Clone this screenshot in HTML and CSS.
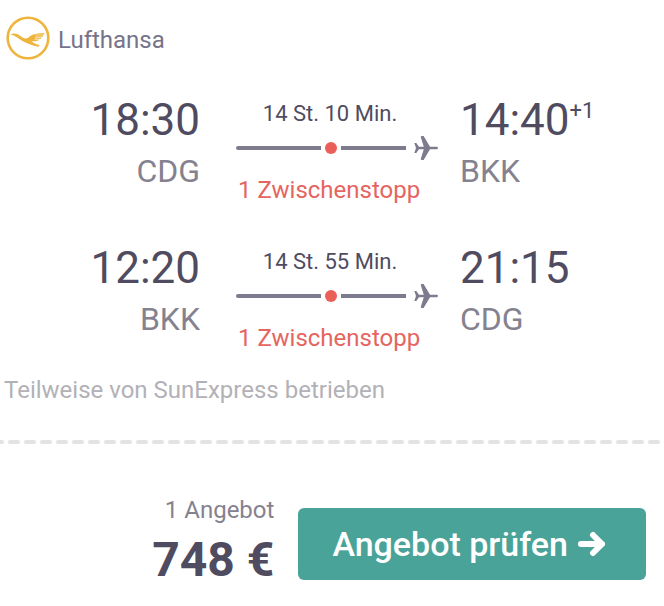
FILE: index.html
```
<!DOCTYPE html>
<html lang="de">

<head>
    <meta charset="UTF-8" />
    <meta name="viewport" content="width=device-width, initial-scale=1" />
    <title>Flugangebot</title>
    <link rel="stylesheet" href="styles.css">
</head>

<body>

    <svg class="sprite" aria-hidden="true">
        <symbol id="plane" viewBox="0 0 24 24">
            <path d="M0.300 7H2.300L5 10.800H9.800L6.800 1.200Q6.700 0 7.800 0H9.600L16 10.800H22.800Q24 10.900 24 12Q24 13.100 22.800 13.200H16L9.600 24H7.800Q6.700 24 6.800 22.800L9.800 13.200H5L2.300 17H0.300L2 12Z" />
        </symbol>
    </svg>

    <main class="ticket">
        <header class="airline">
            <svg class="airline-logo" viewBox="0 0 44 44" aria-hidden="true">
                <circle cx="22" cy="22" r="20.300" fill="none" stroke="#efb43c" stroke-width="2.600" />
                <path fill="#efb43c" d="M4.500 18.200C8 16.800 11 17.300 14 19.800C17 22.300 20 23.300 22.500 21.500C25.500 19 27.500 17.300 38.500 17.300L37.800 18.700H29.500V19.300H37.300L36.500 20.800H29V21.400H35.700L34.800 22.800H28.500V23.400H33.500C31.500 25 28.500 25.300 25.500 25.200C27.500 27 30 28.300 33.800 29L32.500 30.800C26 29.500 21 27 16.500 24.900C12 22.500 9 19.200 4.500 18.200Z" />
            </svg>
            <span class="airline-name">Lufthansa</span>
        </header>

        <section class="leg">
            <div class="stop departure">
                <div class="time">18:30</div>
                <div class="airport">CDG</div>
            </div>
            <div class="route">
                <div class="duration">14 St. 10 Min.</div>
                <div class="track">
                    <span class="line start"></span>
                    <span class="dot"></span>
                    <span class="line"></span>
                    <svg class="plane"><use href="#plane" /></svg>
                </div>
                <div class="stopover">1 Zwischenstopp</div>
            </div>
            <div class="stop">
                <div class="time">14:40<sup>+1</sup></div>
                <div class="airport">BKK</div>
            </div>
        </section>

        <section class="leg">
            <div class="stop departure">
                <div class="time">12:20</div>
                <div class="airport">BKK</div>
            </div>
            <div class="route">
                <div class="duration">14 St. 55 Min.</div>
                <div class="track">
                    <span class="line start"></span>
                    <span class="dot"></span>
                    <span class="line"></span>
                    <svg class="plane"><use href="#plane" /></svg>
                </div>
                <div class="stopover">1 Zwischenstopp</div>
            </div>
            <div class="stop">
                <div class="time">21:15</div>
                <div class="airport">CDG</div>
            </div>
        </section>

        <p class="operated">Teilweise von SunExpress betrieben</p>

        <svg class="divider" aria-hidden="true">
            <line x1="-6" y1="2" x2="100%" y2="2" />
        </svg>

        <footer class="offer">
            <div class="price-box">
                <div class="count">1 Angebot</div>
                <div class="price">748 €</div>
            </div>
            <button type="button" class="check">
                <span>Angebot prüfen</span>
                <svg class="arrow" viewBox="0 0 28 26" aria-hidden="true">
                    <path d="M3 13H24M15 4L24 13L15 22" />
                </svg>
            </button>
        </footer>
    </main>

</body>

</html>
```
FILE: styles.css
```
body {
    margin: 0;
    background: #fff;
    color: #4f4b60;
    font-family: Roboto, "Liberation Sans", sans-serif;
    font-size: 24px;
    line-height: 28px;
}

.sprite {
    display: none;
}

.ticket {
    padding: 16px 4px 0 0;
}

.airline {
    display: flex;
    align-items: center;
    gap: 8px;
    padding-left: 6px;
    margin-bottom: 32px;
    color: #77738a;
}

.airline-logo {
    width: 44px;
    height: 44px;
}

.airline-name {
    padding-top: 4px;
}

.leg {
    display: grid;
    grid-template-columns: 1fr auto 1fr;
}

.leg + .leg {
    margin-top: 36px;
}

.departure {
    text-align: right;
}

.time {
    font-size: 44px;
    line-height: 56px;
}

.time sup {
    font-size: 22px;
    line-height: 22px;
    vertical-align: 17px;
}

.airport {
    color: #85828f;
    font-size: 32px;
    line-height: 46px;
}

.route {
    width: 202px;
    padding: 8px 22px 0 36px;
}

.duration {
    padding-right: 14px;
    font-size: 22px;
    text-align: center;
}

.track {
    display: flex;
    align-items: center;
    gap: 4px;
    height: 40px;
}

.line {
    flex: 1;
    height: 4px;
    background: #7f7b8f;
}

.start {
    flex: 0 0 85px;
    border-radius: 2px 0 0 2px;
}

.dot {
    width: 12px;
    height: 12px;
    border-radius: 50%;
    background: #ea5f59;
}

.plane {
    width: 24px;
    height: 24px;
    margin-left: 4px;
    fill: #7f7b8f;
}

.stopover {
    margin-top: 8px;
    padding-left: 2px;
    color: #e5655f;
    white-space: nowrap;
}

.operated {
    margin: 24px 0 36px;
    padding-left: 4px;
    color: #b2b1b7;
}

.divider {
    display: block;
    width: 100%;
    height: 4px;
}

.divider line {
    stroke: #e3e3e4;
    stroke-width: 4;
    stroke-linecap: round;
    stroke-dasharray: 8 8;
}

.offer {
    display: flex;
    align-items: flex-end;
    justify-content: flex-end;
    gap: 24px;
    padding: 52px 14px 20px 0;
}

.price-box {
    text-align: right;
}

.count {
    color: #85828f;
}

.price {
    margin-top: 12px;
    font-size: 48px;
    font-weight: 700;
    line-height: 48px;
}

.check {
    display: flex;
    align-items: center;
    gap: 10px;
    height: 72px;
    margin: 0 0 4px;
    padding: 0 40px 0 34px;
    border: 0;
    border-radius: 6px;
    background: #4aa398;
    color: #fff;
    font-family: inherit;
    font-size: 34px;
    font-weight: 500;
    cursor: pointer;
}

.arrow {
    width: 28px;
    height: 26px;
    fill: none;
    stroke: #fff;
    stroke-width: 6;
    stroke-linecap: round;
    stroke-linejoin: round;
}
```
